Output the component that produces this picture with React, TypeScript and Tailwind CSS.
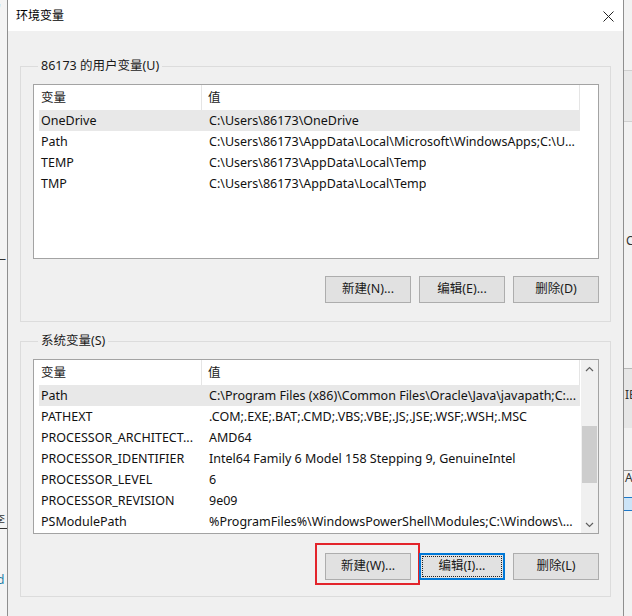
import React from "react";

type Row = { name: string; value: string; selected?: boolean };

const userVars: Row[] = [
  { name: "OneDrive", value: "C:\\Users\\86173\\OneDrive", selected: true },
  { name: "Path", value: "C:\\Users\\86173\\AppData\\Local\\Microsoft\\WindowsApps;C:\\U..." },
  { name: "TEMP", value: "C:\\Users\\86173\\AppData\\Local\\Temp" },
  { name: "TMP", value: "C:\\Users\\86173\\AppData\\Local\\Temp" },
];

const systemVars: Row[] = [
  { name: "Path", value: "C:\\Program Files (x86)\\Common Files\\Oracle\\Java\\javapath;C:...", selected: true },
  { name: "PATHEXT", value: ".COM;.EXE;.BAT;.CMD;.VBS;.VBE;.JS;.JSE;.WSF;.WSH;.MSC" },
  { name: "PROCESSOR_ARCHITECT...", value: "AMD64" },
  { name: "PROCESSOR_IDENTIFIER", value: "Intel64 Family 6 Model 158 Stepping 9, GenuineIntel" },
  { name: "PROCESSOR_LEVEL", value: "6" },
  { name: "PROCESSOR_REVISION", value: "9e09" },
  { name: "PSModulePath", value: "%ProgramFiles%\\WindowsPowerShell\\Modules;C:\\Windows\\..." },
];

function Chevron({ up }: { up?: boolean }) {
  return (
    <svg width="9" height="6" viewBox="0 0 9 6">
      <path
        d={up ? "M1 5 L4.5 1.5 L8 5" : "M1 1 L4.5 4.5 L8 1"}
        fill="none"
        stroke="#606060"
        strokeWidth="1.2"
      />
    </svg>
  );
}

function ScrollBar() {
  return (
    <div className="flex w-[17px] flex-col bg-[#f0f0f0]">
      <div className="flex h-[17px] items-center justify-center">
        <Chevron up />
      </div>
      <div className="flex-1 px-[1px]">
        <div className="mt-[49px] h-[57px] bg-[#cdcdcd]" />
      </div>
      <div className="flex h-[17px] items-center justify-center">
        <Chevron />
      </div>
    </div>
  );
}

function ListView({ rows, scroll }: { rows: Row[]; scroll?: boolean }) {
  return (
    <div className="flex h-[175px] overflow-hidden border border-[#a3a3a3] bg-white">
      <div className="flex w-[547px] flex-col">
        <div className="flex h-[25px] shrink-0 items-center text-[#1a1a1a]">
          <div className="h-full w-[168px] border-r border-[#e5e5e5] pl-[7px] leading-[25px]">
            变量
          </div>
          <div className="h-full w-[378px] border-r border-[#e5e5e5] pl-[6px] leading-[25px]">
            值
          </div>
        </div>
        {rows.map((r) => (
          <div key={r.name} className="flex h-[21px] shrink-0 pl-[5px]">
            <div
              className={`flex w-[541px] items-center whitespace-nowrap pt-[2px] text-[#111] ${
                r.selected ? "bg-[#e8e8e8]" : ""
              }`}
            >
              <span className="w-[163px] overflow-hidden pl-[2px]">{r.name}</span>
              <span className="overflow-hidden pl-[7px]">{r.value}</span>
            </div>
          </div>
        ))}
      </div>
      <div className="flex-1" />
      {scroll && <ScrollBar />}
    </div>
  );
}

function Btn({
  label,
  focused,
  marked,
}: {
  label: string;
  focused?: boolean;
  marked?: boolean;
}) {
  return (
    <div className="relative">
      <button
        type="button"
        className={`relative flex h-[27px] w-[86px] items-center justify-center bg-[#e1e1e1] text-[#1a1a1a] ${
          focused ? "border-2 border-[#0078d7]" : "border border-[#adadad]"
        }`}
      >
        {focused && (
          <span className="absolute inset-[1px] border border-dotted border-[#222]" />
        )}
        {label}
      </button>
      {marked && (
        <div className="absolute -left-[10px] -top-[10px] h-[42px] w-[105px] border-2 border-[#e3242b]" />
      )}
    </div>
  );
}

function Group({
  title,
  rows,
  buttons,
  scroll,
  btnGap,
  bottomPad,
  className,
}: {
  title: string;
  rows: Row[];
  buttons: React.ReactNode;
  scroll?: boolean;
  btnGap: string;
  bottomPad: string;
  className?: string;
}) {
  return (
    <fieldset className={`border border-[#dcdcdc] pl-[12px] pr-[11px] ${bottomPad} ${className ?? ""}`}>
      <legend className="ml-[5px] h-[16px] px-[3px] leading-[16px] text-[#1a1a1a]">
        {title}
      </legend>
      <div className="mt-[10px]">
        <ListView rows={rows} scroll={scroll} />
      </div>
      <div className={`flex justify-end gap-[8px] ${btnGap}`}>{buttons}</div>
    </fieldset>
  );
}

export default function App() {
  return (
    <div className="flex h-[616px] w-[632px] overflow-hidden bg-[#f0f0f0] font-['Noto_Sans','Noto_Sans_CJK_SC',sans-serif] text-[12.5px]">
      {/* background window, left side */}
      <div className="flex w-[7px] shrink-0 flex-col overflow-hidden bg-[#f4f4f4] text-[12px]">
        <span className="-ml-[2px] mt-[2px] leading-[14px] text-[#777]">'</span>
        <span className="-ml-[6px] mt-[238px] leading-[14px] text-[#333]">一</span>
        <span className="-ml-[7px] mt-[246px] border-b border-[#333] leading-[14px] text-[#333]">李</span>
        <span className="-ml-[3px] mt-[44px] leading-[14px] text-[#1f7fa8]">d</span>
      </div>

      {/* dialog */}
      <div className="flex w-[617px] shrink-0 flex-col border-x border-[#8f8f8f] bg-[#f0f0f0]">
        <div className="flex h-[31px] shrink-0 items-center justify-between bg-white pl-[8px] pr-[9px] pt-[1px]">
          <span className="text-[12px] text-black">环境变量</span>
          <svg width="11" height="11" viewBox="0 0 11 11">
            <path d="M0.5 0.5 L10.5 10.5 M10.5 0.5 L0.5 10.5" stroke="#222" strokeWidth="1" />
          </svg>
        </div>

        <div className="flex flex-col px-[12px] pt-[27px]">
          <Group
            title="86173 的用户变量(U)"
            rows={userVars}
            btnGap="mt-[17px]"
            bottomPad="pb-[18px]"
            buttons={
              <>
                <Btn label="新建(N)..." />
                <Btn label="编辑(E)..." />
                <Btn label="删除(D)" />
              </>
            }
          />
          <Group
            title="系统变量(S)"
            rows={systemVars}
            scroll
            btnGap="mt-[19px]"
            bottomPad="pb-[16px]"
            className="mt-[11px]"
            buttons={
              <>
                <Btn label="新建(W)..." marked />
                <Btn label="编辑(I)..." focused />
                <Btn label="删除(L)" />
              </>
            }
          />
          <div className="mt-[19px] flex justify-end gap-[10px] pr-[17px]">
            <div className="h-[24px] w-[86px] border border-[#adadad] bg-[#e1e1e1]" />
            <div className="h-[24px] w-[86px] border border-[#adadad] bg-[#e1e1e1]" />
          </div>
        </div>
      </div>

      {/* background window, right side */}
      <div className="flex w-[8px] shrink-0 flex-col overflow-hidden bg-[#f2f2f2] text-[12px] text-[#333]">
        <div className="mt-[70px] h-[52px] border-y border-[#d0d0d0] bg-[#e9e9e9]" />
        <span className="mt-[112px] pl-[2px] leading-[14px]">C</span>
        <div className="mt-[120px] h-[60px] border-t border-[#b8b8b8] bg-[#e6e6e6]" />
        <span className="-mt-[40px] pl-[1px] leading-[14px]">IE</span>
        <div className="mt-[68px] border-t border-[#999]" />
        <span className="pl-[1px] leading-[14px]">A</span>
        <div className="mt-[12px] h-[14px] border-y border-[#1e78c8] bg-[#cce4f7]" />
      </div>
    </div>
  );
}
